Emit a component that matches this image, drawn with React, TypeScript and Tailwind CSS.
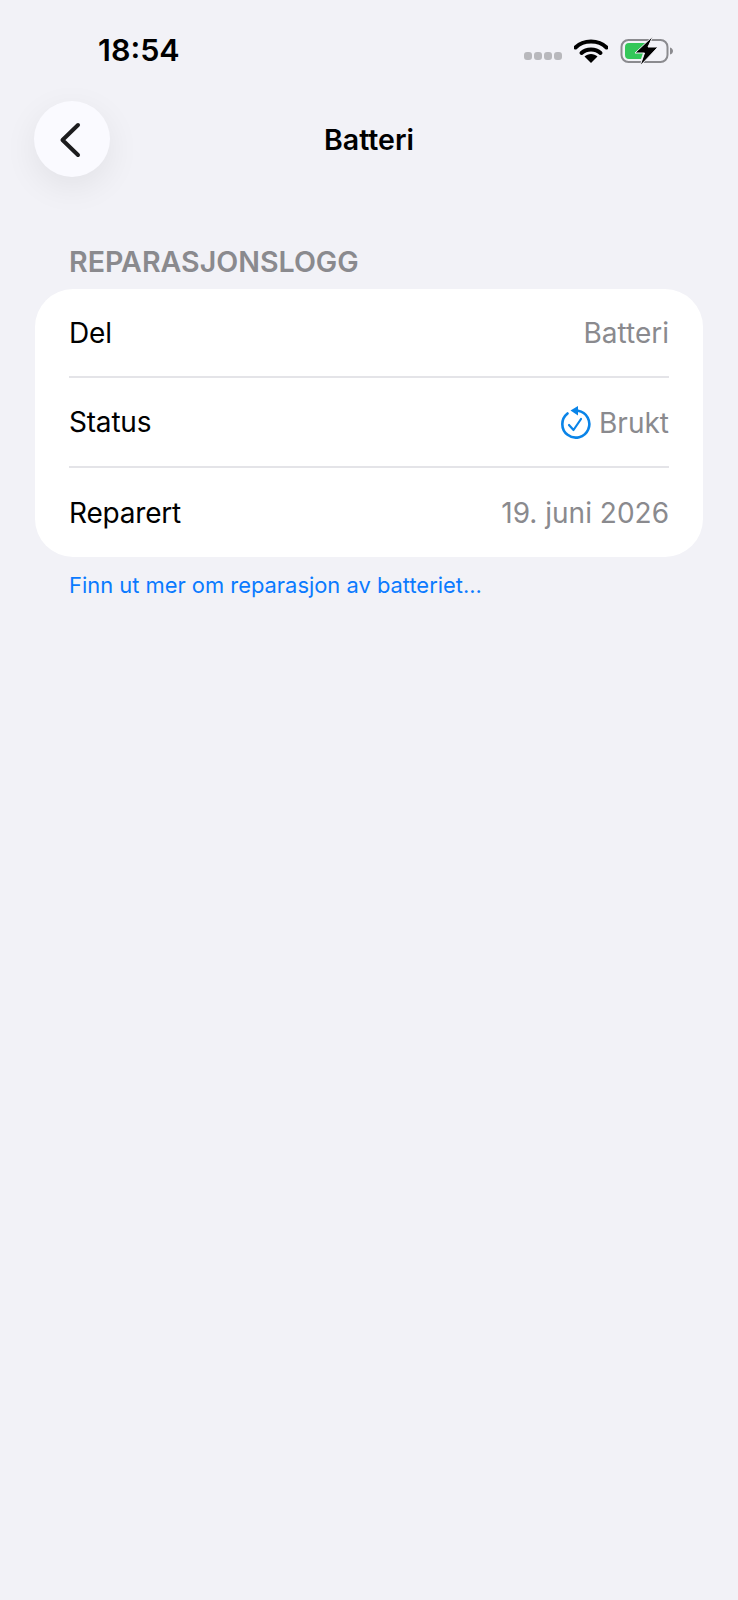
const font = { fontFamily: "Inter, sans-serif" };

const StatusBar = () => (
  <div className="flex h-[100px] items-start pt-[30px]">
    <div className="ml-[98px] text-[30.500px] leading-[40px] font-semibold text-black">18:54</div>
    <div className="ml-auto mr-[64px] flex items-center pt-[6px]">
      <div className="mr-[12px] mt-[10px] flex gap-[2px]">
        <span className="h-[8px] w-[8px] rounded-[3px] bg-[#b8b8bc]" />
        <span className="h-[8px] w-[8px] rounded-[3px] bg-[#b8b8bc]" />
        <span className="h-[8px] w-[8px] rounded-[3px] bg-[#b8b8bc]" />
        <span className="h-[8px] w-[8px] rounded-[3px] bg-[#b8b8bc]" />
      </div>
      <svg width="34" height="26" viewBox="0 0 34 26" className="mr-[12px]">
        <path d="M1.500 9.500C9.500 1.500 24.500 1.500 32.500 9.500" fill="none" stroke="#000" strokeWidth="4" strokeLinecap="round" />
        <path d="M7.500 15C12.500 10.300 21.500 10.300 26.500 15" fill="none" stroke="#000" strokeWidth="4" strokeLinecap="round" />
        <path d="M10.500 18.500C14 15 20 15 23.500 18.500L17 25Z" fill="#000" />
      </svg>
      <svg width="54" height="30" viewBox="0 0 54 30">
        <rect x="1.500" y="4" width="46" height="22" rx="7" fill="none" stroke="#8b8b8f" strokeWidth="2" />
        <path d="M5 11a4 4 0 0 1 4-4h17l-8 10h5l-2 6H9a4 4 0 0 1-4-4Z" fill="#34c759" />
        <path d="M50 11.500c2 .5 3 2 3 3.500s-1 3-3 3.500Z" fill="#8b8b8f" />
        <path d="M33 0 15 17h9.500l-4.500 13 18-19h-10l5-11Z" fill="#000" stroke="#f2f2f7" strokeWidth="1" />
      </svg>
    </div>
  </div>
);

const StatusIcon = () => (
  <svg width="32" height="34" viewBox="0 0 32 34" className="mr-[8px] -ml-[1px]">
    <path d="M19 5.800A13.500 13.500 0 1 1 8.500 8.500" fill="none" stroke="#0a84e8" strokeWidth="2.600" strokeLinecap="round" />
    <path d="M19 1V10.500L11.500 5.500Z" fill="#0a84e8" />
    <path d="M10 20l4.500 5L22 14" fill="none" stroke="#0a84e8" strokeWidth="2.200" strokeLinecap="round" strokeLinejoin="round" />
  </svg>
);

const Row = ({ label, value, icon }: { label: string; value: string; icon?: boolean }) => (
  <div className="flex h-full items-center justify-between">
    <span className="text-[28px] leading-[34px] tracking-[-0.2px] text-black">{label}</span>
    <span className="flex items-center text-[28px] leading-[34px] text-[#8a8a8e]">
      {icon && <StatusIcon />}
      <span className={icon ? "pt-[2px]" : ""}>{value}</span>
    </span>
  </div>
);

export default function App() {
  return (
    <div className="min-h-[1600px] w-[738px] bg-[#f2f2f7]" style={font}>
      <StatusBar />
      <div className="relative flex h-[80px] items-center justify-center">
        <div className="absolute left-[34px] top-[1px] flex h-[76px] w-[76px] items-center justify-center rounded-full bg-[#fafaff] shadow-[0_10px_34px_rgba(0,0,0,0.07)]">
          <svg width="24" height="36" viewBox="0 0 24 36" className="mr-[5px] mt-[2px]">
            <path d="M20 3 4.500 18 20 33" fill="none" stroke="#1c1c1e" strokeWidth="4" strokeLinecap="round" strokeLinejoin="round" />
          </svg>
        </div>
        <h1 className="text-[28.500px] leading-[34px] font-semibold text-black">Batteri</h1>
      </div>

      <div className="pt-[65px]">
        <div className="pl-[69px] text-[28.600px] leading-[34px] font-semibold text-[#8a8a8e]">REPARASJONSLOGG</div>
        <div className="mx-[35px] mt-[10px] h-[268px] rounded-[38px] bg-white px-[34px]">
          <div className="h-[89px] border-b-2 border-[#e4e4e8]"><Row label="Del" value="Batteri" /></div>
          <div className="h-[90px] border-b-2 border-[#e4e4e8]"><Row label="Status" value="Brukt" icon /></div>
          <div className="h-[89px]"><Row label="Reparert" value="19. juni 2026" /></div>
        </div>
        <div className="pl-[69px] pt-[13px] text-[21.900px] leading-[30px] text-[#0a7aff]">Finn ut mer om reparasjon av batteriet...</div>
      </div>
    </div>
  );
}
